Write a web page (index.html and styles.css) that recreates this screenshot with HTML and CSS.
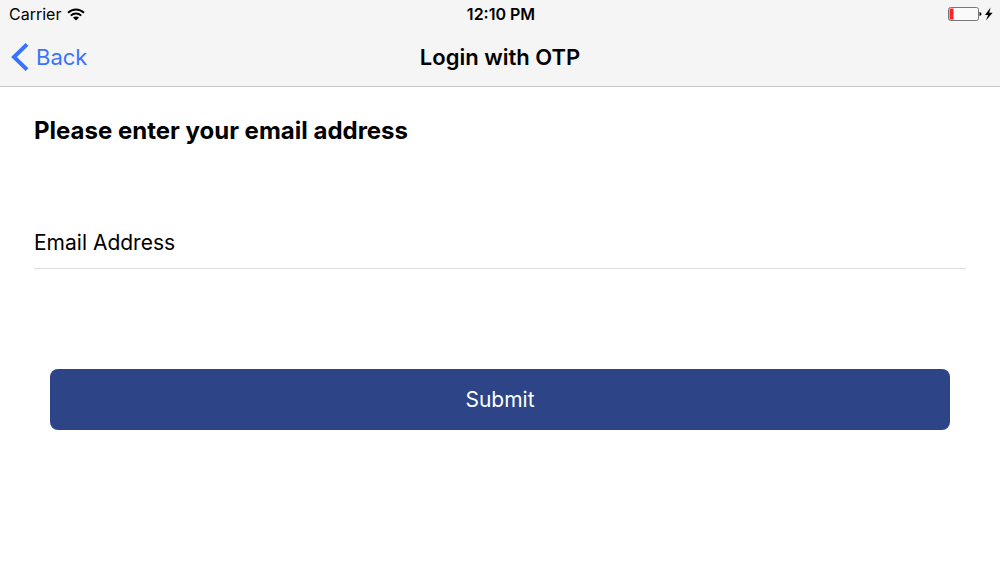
FILE: index.html
```html
<!DOCTYPE html>
<html lang="en">
<head>
<meta charset="utf-8">
<meta name="viewport" content="width=device-width, initial-scale=1">
<title>Login with OTP</title>
<link rel="stylesheet" href="styles.css">
</head>
<body>
<header class="header">
  <div class="status">
    <div class="status-side">
      <span>Carrier</span>
      <svg class="wifi" width="18" height="13" viewBox="0 0 18 13" aria-hidden="true">
        <path d="M1 4.7C5.6.3 12.4.3 17 4.7M3.8 7.6c3-2.9 7.4-2.9 10.4 0" fill="none" stroke="#000" stroke-width="2"/>
        <path d="M9 12.6 5.9 9.6q3.1-2.4 6.2 0z"/>
      </svg>
    </div>
    <time class="clock">12:10 PM</time>
    <div class="status-side status-end">
      <svg width="46" height="16" viewBox="0 0 46 16" aria-label="Battery low, charging" role="img">
        <rect x="1.5" y="1.5" width="30" height="13" rx="2" fill="#fafafa" stroke="#777"/>
        <path d="M2.5 2.5h4v11h-4z" fill="#ff2428"/>
        <path d="M32.5 6q2 .3 2 2t-2 2z"/>
        <path d="M43.6 1.5 38 9h3.1L39 14.5l6.6-7.7h-3.4z"/>
      </svg>
    </div>
  </div>
  <nav class="nav">
    <button class="back" type="button">
      <svg width="18" height="28" viewBox="0 0 18 28" aria-hidden="true"><path d="M16 1.4 3 14l13 12.6" fill="none" stroke="currentColor" stroke-width="4"/></svg>
      <span>Back</span>
    </button>
    <h1 class="title">Login with OTP</h1>
  </nav>
</header>
<main>
  <form class="form">
    <h2 class="prompt">Please enter your email address</h2>
    <div class="field">
      <label for="email">Email Address</label>
      <input class="input" id="email" type="email" name="email">
    </div>
    <div class="actions"><button class="submit" type="submit">Submit</button></div>
  </form>
</main>
</body>
</html>
```
FILE: styles.css
```css
* { box-sizing: border-box; }
body {
  margin: 0;
  background: #fff;
  color: #000;
  font-family: Inter, "Liberation Sans", sans-serif;
}
button, input { font: inherit; border: 0; }
.header {
  background: #f5f5f5;
  border-bottom: 1px solid #c8c8c8;
}
.status {
  display: grid;
  grid-template-columns: 1fr auto 1fr;
  align-items: center;
  height: 28px;
  padding: 0 7px 0 9px;
  font-size: 16px;
}
.status-side { display: flex; align-items: center; gap: 6px; }
.status-end { justify-content: flex-end; }
.clock { font-weight: 600; }
.nav {
  display: grid;
  grid-template-columns: 1fr auto 1fr;
  align-items: center;
  height: 58px;
  padding: 0 11px;
}
.back {
  display: flex;
  align-items: center;
  justify-self: start;
  gap: 7px;
  padding: 0;
  background: none;
  color: #3973ff;
  font-size: 22px;
  cursor: pointer;
}
.title { margin: 0; font-size: 22px; font-weight: 600; }
.form { padding: 29px 34px; }
.prompt { margin: 0 0 71px; font-size: 24px; line-height: 30px; font-weight: 700; }
.field {
  display: flex;
  align-items: center;
  height: 52px;
  border-bottom: 1px solid #dedede;
  font-size: 21px;
}
.input {
  flex: 1;
  min-width: 0;
  height: 100%;
  padding: 0 8px;
  background: transparent;
  outline: none;
}
.actions { padding: 100px 16px 0; }
.submit {
  display: block;
  width: 100%;
  padding: 16px;
  border-radius: 8px;
  background: #2d4486;
  color: #fff;
  font-size: 21px;
  line-height: 29px;
  cursor: pointer;
}
```
